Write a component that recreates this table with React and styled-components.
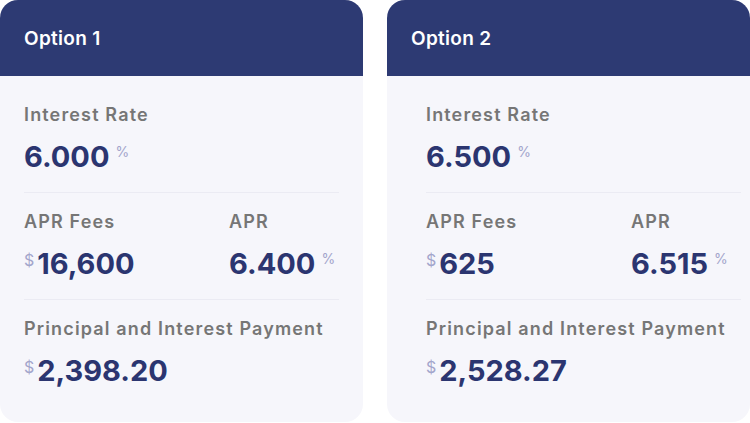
import React from 'react'
import styled, { createGlobalStyle } from 'styled-components'

const options = [
  {
    title: 'Option 1',
    inset: 24,
    rate: '6.000',
    fees: '16,600',
    apr: '6.400',
    payment: '2,398.20',
  },
  {
    title: 'Option 2',
    inset: 39,
    rate: '6.500',
    fees: '625',
    apr: '6.515',
    payment: '2,528.27',
  },
]

export default function App() {
  return (
    <>
      <GlobalStyle />
      <Page>
        {options.map((o) => (
          <Card key={o.title}>
            <Header>{o.title}</Header>
            <Body $inset={o.inset}>
              <Section>
                <Field>
                  <Label>Interest Rate</Label>
                  <Value>
                    {o.rate}
                    <Suffix>%</Suffix>
                  </Value>
                </Field>
              </Section>
              <Section>
                <Columns>
                  <Field>
                    <Label>APR Fees</Label>
                    <Value>
                      <Prefix>$</Prefix>
                      {o.fees}
                    </Value>
                  </Field>
                  <Field>
                    <Label>APR</Label>
                    <Value>
                      {o.apr}
                      <Suffix>%</Suffix>
                    </Value>
                  </Field>
                </Columns>
              </Section>
              <Section $last>
                <Field>
                  <Label>Principal and Interest Payment</Label>
                  <Value>
                    <Prefix>$</Prefix>
                    {o.payment}
                  </Value>
                </Field>
              </Section>
            </Body>
          </Card>
        ))}
      </Page>
    </>
  )
}

const GlobalStyle = createGlobalStyle`
  html, body {
    margin: 0;
    padding: 0;
    background: #ffffff;
  }
  body {
    font-family: Inter, "Open Sans", sans-serif;
  }
`

const Page = styled.div`
  display: flex;
  gap: 24px;
  width: 750px;
  height: 423px;
`

const Card = styled.div`
  width: 363px;
  height: 422px;
  flex-shrink: 0;
  border-radius: 18px;
  overflow: hidden;
  background: #f6f6fb;
  display: flex;
  flex-direction: column;
`

const Header = styled.div`
  height: 76px;
  flex-shrink: 0;
  display: flex;
  align-items: center;
  padding: 0 24px;
  background: #2d3a73;
  color: #ffffff;
  font-size: 19px;
  font-weight: 600;
  letter-spacing: 0.3px;
`

// the second card's body sits 15px further in than its header
const Body = styled.div`
  padding: 10px ${(p) => 363 - p.$inset - 315}px 0 ${(p) => p.$inset}px;
`

const Section = styled.div`
  padding: 18px 0;
  border-bottom: ${(p) => (p.$last ? 'none' : '1.5px solid #ebebf3')};
`

const Columns = styled.div`
  display: grid;
  grid-template-columns: 205px 1fr;
`

const Field = styled.div`
  display: flex;
  flex-direction: column;
  gap: 14px;
`

const Label = styled.div`
  font-size: 18px;
  line-height: 22px;
  font-weight: 600;
  letter-spacing: 1.15px;
  color: #767676;
  white-space: nowrap;
`

const Value = styled.div`
  display: flex;
  align-items: flex-start;
  font-size: 29px;
  line-height: 34px;
  font-weight: 700;
  color: #2b3570;
`

const Suffix = styled.span`
  font-size: 14px;
  line-height: 14px;
  font-weight: 400;
  color: #a3a5cb;
  margin: 5px 0 0 6px;
`

const Prefix = styled.span`
  font-size: 16px;
  line-height: 16px;
  font-weight: 400;
  color: #a3a5cb;
  margin: 5px 3px 0 0;
`
